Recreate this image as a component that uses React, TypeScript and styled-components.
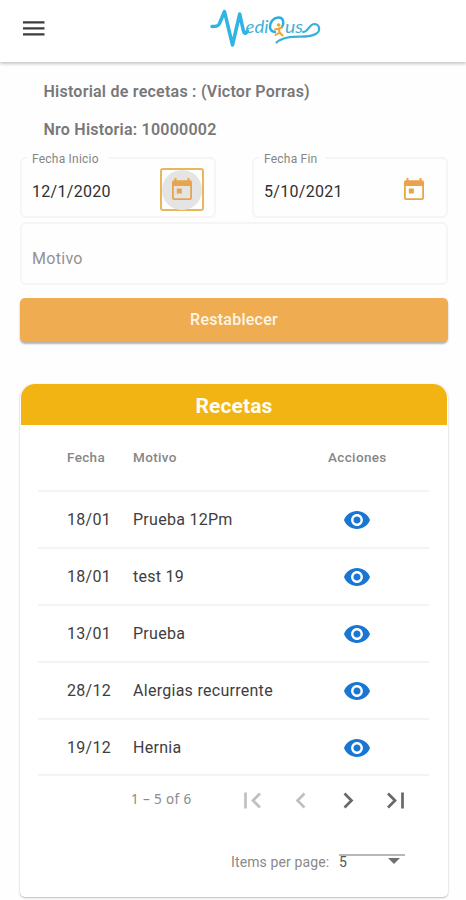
import React from "react";
import styled, { createGlobalStyle } from "styled-components";

const Global = createGlobalStyle`
  *, *::before, *::after { box-sizing: border-box; }
  body { margin: 0; background: #fefefe; font-family: Roboto, "Liberation Sans", sans-serif; color: #3b3b3b; }
  button { font-family: inherit; border: 0; background: none; padding: 0; }
`;

const Page = styled.div`
  width: 466px;
  height: 900px;
  overflow: hidden;
`;

const TopBar = styled.header`
  height: 62px;
  display: flex;
  align-items: flex-start;
  padding-left: 22px;
  background: #fff;
  box-shadow: 0 2px 3px rgba(0, 0, 0, 0.22);
`;

const MenuButton = styled.button`
  display: flex;
  margin-top: 20px;
  width: 24px;
  height: 18px;
`;

const Logo = styled.svg`
  display: block;
  margin: 4px 0 0 160px;
`;

const Main = styled.main`
  padding: 20px 18px 0 20px;
`;

const Heading = styled.h1`
  margin: 0 0 0 23.5px;
  height: 38px;
  line-height: 20px;
  font-size: 16px;
  font-weight: 600;
  letter-spacing: 0.24px;
  color: #787878;
  white-space: nowrap;
`;

const Dates = styled.div`
  display: grid;
  grid-template-columns: 196px 196px;
  justify-content: space-between;
  margin-top: -7px;
`;

const Field = styled.fieldset`
  min-width: 0;
  margin: 0;
  height: 67px;
  padding: 0 11px 0 10px;
  border: 2px solid #f5f5f5;
  border-radius: 6px;
`;

const Label = styled.legend`
  height: 14px;
  margin-left: -5px;
  padding: 0 9px 0 5px;
  font-size: 12px;
  line-height: 16px;
  letter-spacing: 0.22px;
  color: #858585;
  white-space: nowrap;
`;

const FieldRow = styled.div`
  display: flex;
  align-items: center;
  justify-content: space-between;
  height: 48px;
  font-size: 16px;
  letter-spacing: 0.3px;
  color: #303030;
`;

const DateValue = styled.span`
  padding-top: 5px;
`;

const DateButton = styled.button<{ $focused?: boolean }>`
  width: 44px;
  height: 43px;
  display: grid;
  place-items: center;
  margin-right: -1px;
  border: 2px solid ${(p) => (p.$focused ? "#e7b75e" : "transparent")};
  border-radius: 3px;
`;

const Halo = styled.span<{ $on?: boolean }>`
  width: 40px;
  height: 40px;
  display: grid;
  place-items: center;
  border-radius: 50%;
  background: ${(p) => (p.$on ? "#e4e4e4" : "transparent")};
`;

const ReasonField = styled.div`
  display: flex;
  align-items: center;
  height: 63px;
  margin-top: 4px;
  padding: 9px 10px 0;
  border: 2px solid #f5f5f5;
  border-radius: 6px;
  font-size: 16px;
  letter-spacing: 0.3px;
  color: #929292;
`;

const ResetButton = styled.button`
  display: block;
  width: 100%;
  height: 44px;
  margin-top: 13px;
  padding-bottom: 2px;
  border-radius: 5px;
  background: #efac50;
  color: #fff6e6;
  font-size: 16px;
  font-weight: 500;
  letter-spacing: 0.25px;
  box-shadow: 0 2px 2px rgba(0, 0, 0, 0.3);
`;

const Card = styled.section`
  height: 513px;
  margin-top: 42px;
  border-radius: 14px 14px 5px 5px;
  background: #fff;
  box-shadow: 0 1px 2px rgba(0, 0, 0, 0.25), 0 0 2px rgba(0, 0, 0, 0.06);
`;

const CardTitle = styled.h2`
  margin: 0 1px;
  height: 41px;
  line-height: 44px;
  border-radius: 14px 14px 0 0;
  background: #f2b413;
  color: #fffdf4;
  text-align: center;
  font-size: 21px;
  font-weight: 700;
  letter-spacing: 0.1px;
`;

const Table = styled.div`
  margin: 0 19px 0 18px;
`;

const Row = styled.div<{ $head?: boolean }>`
  display: grid;
  grid-template-columns: 66px 195px 58px;
  padding-left: 29px;
  align-items: center;
  height: ${(p) => (p.$head ? 67 : 56.9)}px;
  padding-bottom: ${(p) => (p.$head ? 1 : 0)}px;
  border-bottom: 2px solid #f4f4f4;
  font-size: ${(p) => (p.$head ? 13.5 : 16)}px;
  font-weight: ${(p) => (p.$head ? 500 : 400)};
  letter-spacing: ${(p) => (p.$head ? 0.35 : 0.28)}px;
  color: ${(p) => (p.$head ? "#868686" : "#3e3e3e")};
  white-space: nowrap;
`;

const ActionCell = styled.span`
  display: flex;
  justify-content: center;
  padding-top: 2px;
`;

const Pager = styled.div`
  display: flex;
  align-items: center;
  height: 48px;
  padding-left: 111px;
`;

const Range = styled.span`
  width: 98px;
  padding-bottom: 2px;
  font-family: "Noto Sans", sans-serif;
  font-size: 13.5px;
  letter-spacing: 0.38px;
  color: #8a8a8a;
`;

const PageButton = styled.button<{ $muted?: boolean }>`
  width: 47.5px;
  height: 32px;
  display: grid;
  place-items: center;
  color: ${(p) => (p.$muted ? "#c0c0c0" : "#686868")};
`;

const PageSize = styled.div`
  display: flex;
  margin: 30px 0 0 211px;
  font-size: 14px;
  line-height: 16px;
  letter-spacing: 0.12px;
  color: #8a8a8a;
  white-space: nowrap;
`;

const SizeSelect = styled.div`
  display: flex;
  justify-content: space-between;
  width: 66px;
  height: 18px;
  margin-left: auto;
  margin-right: 43px;
  padding-right: 5px;
  border-top: 2px solid #b8b8b8;
  line-height: 13px;
  color: #555;
`;

const MenuIcon = () => (
  <svg width="24" height="18" viewBox="0 0 24 18" fill="#3d3d3d">
    <path d="M1 1.2h21.5v2.4H1zM1 7.2h21.5v2.4H1zM1 13.2h21.5v2.4H1z" />
  </svg>
);

const CalendarIcon = () => (
  <svg width="20" height="23" viewBox="0 0 20 23">
    <path
      fillRule="evenodd"
      fill="#e9a44b"
      d="M2.500 0h2v2.200h11V0h2v2.200h.5a2 2 0 0 1 2 2V20a2 2 0 0 1-2 2H2a2 2 0 0 1-2-2V4.200a2 2 0 0 1 2-2h.5zM1.800 8v12.200h16.400V8z"
    />
    <path fill="#e9a44b" d="M4.800 10.500h5v5h-5z" />
  </svg>
);

const EyeIcon = () => (
  <svg width="26" height="18" viewBox="1 4.500 22 15" preserveAspectRatio="none">
    <path
      fill="#1976d2"
      d="M12 4.500C7 4.500 2.730 7.610 1 12c1.730 4.390 6 7.500 11 7.500s9.270-3.110 11-7.500c-1.730-4.390-6-7.500-11-7.500zM12 17c-2.760 0-5-2.240-5-5s2.240-5 5-5 5 2.240 5 5-2.240 5-5 5zm0-8c-1.660 0-3 1.340-3 3s1.340 3 3 3 3-1.340 3-3-1.340-3-3-3z"
    />
  </svg>
);

const pagerPaths = {
  first: "M4.500 4.500v16M19 5.500l-7 7 7 7",
  previous: "M16.500 5.500l-7 7 7 7",
  next: "M8.500 5.500l7 7-7 7",
  last: "M5 5.500l7 7-7 7M19.500 4.500v16",
};

const PagerIcon = ({ name }: { name: keyof typeof pagerPaths }) => (
  <svg width="24" height="25" viewBox="0 0 24 25" fill="none" stroke="currentColor" strokeWidth="2.700">
    <path d={pagerPaths[name]} />
  </svg>
);

const Brand = () => (
  <Logo width="118" height="48" viewBox="206 4 118 48" fill="none" strokeLinecap="round" strokeLinejoin="round">
    <path d="M212 26.500c4 0 6 0 7.500-3L224.500 11.500l8 33.500 7.200-31 3.300 15c.8 4 2 6 4.500 2" stroke="#2fb4e5" strokeWidth="3.500" />
    <g fill="#42b1d8" fontFamily="Lato, sans-serif" fontStyle="italic" fontSize="18">
      <text x="245.500" y="33" textLength="23" lengthAdjust="spacingAndGlyphs">edi</text>
      <text x="285" y="33" textLength="18" lengthAdjust="spacingAndGlyphs">us</text>
    </g>
    <path d="M275 32c-3-.5-5-2.500-5-5 0-5.500 4-9.500 8.500-9.500 5 0 6 5.500 3.500 9.500" stroke="#2caee0" strokeWidth="2.500" />
    <circle cx="278.700" cy="25" r="1.800" fill="#efa52c" />
    <path d="m275 29.500 4-1 3-1m-3 1 .5 4-4 2.500m4-2.500 3 3" stroke="#efa52c" strokeWidth="2" />
    <path d="M303 32c5 0 6-7.500 11-8 5.500 0 7 6.500 2.500 9.500-7 5-19 2-29 4-4 1-8 2-11 5" stroke="#38b2dc" strokeWidth="2.200" />
  </Logo>
);

const recipes = [
  { date: "18/01", reason: "Prueba 12Pm" },
  { date: "18/01", reason: "test 19" },
  { date: "13/01", reason: "Prueba" },
  { date: "28/12", reason: "Alergias recurrente" },
  { date: "19/12", reason: "Hernia" },
];

const DateField = ({ label, value, focused }: { label: string; value: string; focused?: boolean }) => (
  <Field>
    <Label>{label}</Label>
    <FieldRow>
      <DateValue>{value}</DateValue>
      <DateButton $focused={focused} aria-label={label}>
        <Halo $on={focused}>
          <CalendarIcon />
        </Halo>
      </DateButton>
    </FieldRow>
  </Field>
);

export default function App() {
  return (
    <Page>
      <Global />
      <TopBar>
        <MenuButton aria-label="Menu">
          <MenuIcon />
        </MenuButton>
        <Brand />
      </TopBar>
      <Main>
        <Heading>Historial de recetas : (Victor Porras)</Heading>
        <Heading>Nro Historia: 10000002</Heading>
        <Dates>
          <DateField label="Fecha Inicio" value="12/1/2020" focused />
          <DateField label="Fecha Fin" value="5/10/2021" />
        </Dates>
        <ReasonField>Motivo</ReasonField>
        <ResetButton>Restablecer</ResetButton>
        <Card>
          <CardTitle>Recetas</CardTitle>
          <Table>
            <Row $head>
              <span>Fecha</span>
              <span>Motivo</span>
              <span>Acciones</span>
            </Row>
            {recipes.map((recipe, i) => (
              <Row key={i}>
                <span>{recipe.date}</span>
                <span>{recipe.reason}</span>
                <ActionCell>
                  <EyeIcon />
                </ActionCell>
              </Row>
            ))}
          </Table>
          <Pager>
            <Range>1 – 5 of 6</Range>
            <PageButton $muted aria-label="First">
              <PagerIcon name="first" />
            </PageButton>
            <PageButton $muted aria-label="Previous">
              <PagerIcon name="previous" />
            </PageButton>
            <PageButton aria-label="Next">
              <PagerIcon name="next" />
            </PageButton>
            <PageButton aria-label="Last">
              <PagerIcon name="last" />
            </PageButton>
          </Pager>
          <PageSize>
            <span>Items per page:</span>
            <SizeSelect>
              <span>5</span>
              <svg width="12" height="8" viewBox="0 0 12 8" fill="#707070">
                <path d="M0 2h12L6 8z" />
              </svg>
            </SizeSelect>
          </PageSize>
        </Card>
      </Main>
    </Page>
  );
}
